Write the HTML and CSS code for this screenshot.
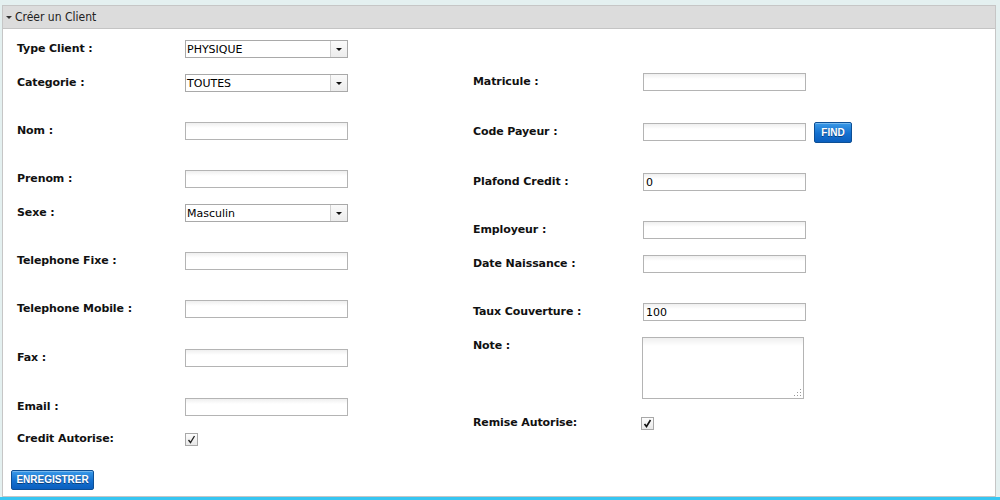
FILE: index.html
```html
<!DOCTYPE html>
<html>
<head>
<meta charset="utf-8">
<link rel="stylesheet" href="styles.css">
</head>
<body>
<div class="panel">
  <div class="panel-head"><span class="caret"></span>Créer un Client</div>
  <div class="panel-body">
    <div class="form">
      <div class="col left">
        <div class="row"><label>Type Client :</label><div class="select"><span class="val">PHYSIQUE</span><span class="arrow"></span></div></div>
        <div class="row m16"><label>Categorie :</label><div class="select"><span class="val">TOUTES</span><span class="arrow"></span></div></div>
        <div class="row m30"><label>Nom :</label><div class="input"></div></div>
        <div class="row m30"><label>Prenom :</label><div class="input"></div></div>
        <div class="row m16"><label>Sexe :</label><div class="select"><span class="val">Masculin</span><span class="arrow"></span></div></div>
        <div class="row m30"><label>Telephone Fixe :</label><div class="input"></div></div>
        <div class="row m30"><label>Telephone Mobile :</label><div class="input"></div></div>
        <div class="row m31"><label>Fax :</label><div class="input"></div></div>
        <div class="row m31"><label>Email :</label><div class="input"></div></div>
        <div class="row m14"><label>Credit Autorise:</label><span class="check"><svg viewBox="0 0 11 11" width="11" height="11"><path d="M2.5 6 L4.5 8.5 L8.5 2" fill="none" stroke="#222" stroke-width="1.3"/></svg></span></div>
      </div>
      <div class="col right">
        <div class="row m33"><label>Matricule :</label><div class="input"></div></div>
        <div class="row m32"><label>Code Payeur :</label><div class="input"></div><button class="btn find">FIND</button></div>
        <div class="row m32"><label>Plafond Credit :</label><div class="input">0</div></div>
        <div class="row m30"><label>Employeur :</label><div class="input"></div></div>
        <div class="row m16"><label>Date Naissance :</label><div class="input"></div></div>
        <div class="row m30"><label>Taux Couverture :</label><div class="input">100</div></div>
        <div class="row m16 top"><label>Note :</label><div class="textarea"><span class="grip"></span></div></div>
        <div class="row m15"><label>Remise Autorise:</label><span class="check r"><svg viewBox="0 0 11 11" width="11" height="11"><path d="M2.5 6 L4.5 8.5 L8.5 2" fill="none" stroke="#111" stroke-width="1.6"/></svg></span></div>
      </div>
    </div>
    <div class="actions"><button class="btn save">ENREGISTRER</button></div>
  </div>
</div>
<div class="bottom-bar"></div>
</body>
</html>
```

FILE: styles.css
```css
html, body {
  margin: 0;
  padding: 0;
}
body {
  background: #e4f0f0;
  font-family: "DejaVu Sans", Verdana, sans-serif;
  color: #111;
  width: 1000px;
  height: 500px;
  overflow: hidden;
  position: relative;
}
.panel {
  margin: 5px 4px 0 2px;
  border: 1px solid #c6c6c6;
  background: #fff;
  height: 492px;
  box-sizing: border-box;
}
.panel-head {
  height: 22px;
  background: #dcdcdc;
  border-bottom: 1px solid #c4c4c4;
  font-family: "DejaVu Sans Condensed", "DejaVu Sans", sans-serif;
  font-size: 12px;
  color: #222;
  display: flex;
  align-items: center;
  padding-left: 3px;
}
.caret {
  width: 0;
  height: 0;
  border-left: 3px solid transparent;
  border-right: 3px solid transparent;
  border-top: 3px solid #333;
  margin-right: 3px;
  margin-top: 1px;
}
.panel-body {
  padding: 11px 0 0 8px;
}
.form {
  display: flex;
  padding-left: 6px;
}
.col {
  display: flex;
  flex-direction: column;
}
.col.left {
  width: 456px;
}
.row {
  display: flex;
  align-items: center;
  height: 18px;
}
.row.top {
  align-items: flex-start;
  height: auto;
}
.row.top label {
  margin-top: 2px;
}
.m14 { margin-top: 14px; }
.m15 { margin-top: 15px; }
.m16 { margin-top: 16px; }
.m30 { margin-top: 30px; }
.m31 { margin-top: 31px; }
.m32 { margin-top: 32px; }
.m33 { margin-top: 33px; }
label {
  font-weight: bold;
  font-size: 11px;
  width: 168px;
  flex: none;
  white-space: nowrap;
  letter-spacing: -0.1px;
  margin-top: -1px;
}
.right label {
  width: 170px;
}
.input, .select {
  width: 163px;
  height: 18px;
  box-sizing: border-box;
  border: 1px solid #b4b4b4;
  background: linear-gradient(#efefef, #fff 5px);
  font-size: 11px;
  line-height: 14px;
  padding: 2px 0 0 2px;
  color: #000;
}
.select {
  display: flex;
  background: #fff;
  padding: 0;
  border-color: #a9a9a9;
}
.select .val {
  flex: 1;
  padding: 2px 0 0 1px;
}
.select .arrow {
  width: 16px;
  border-left: 1px solid #d0d0d0;
  background: linear-gradient(#fafafa, #ececec);
  display: flex;
  align-items: center;
  justify-content: center;
}
.select .arrow::before {
  content: "";
  border-left: 3px solid transparent;
  border-right: 3px solid transparent;
  border-top: 3px solid #111;
}
.check {
  width: 13px;
  height: 13px;
  box-sizing: border-box;
  border: 1px solid #a8a8a8;
  background: linear-gradient(#fdfdfd, #e8e8e8);
  display: flex;
  align-items: center;
  justify-content: center;
}
.check.r {
  margin-left: -2px;
}
.textarea {
  width: 162px;
  height: 62px;
  box-sizing: border-box;
  border: 1px solid #b4b4b4;
  background: linear-gradient(#efefef, #fff 8px);
  margin-left: -1px;
  position: relative;
}
.grip {
  position: absolute;
  right: 2px;
  bottom: 2px;
  width: 8px;
  height: 8px;
  background:
    radial-gradient(circle, #999 0.7px, transparent 0.8px) 0 0 / 3px 3px;
  clip-path: polygon(100% 0, 100% 100%, 0 100%);
}
.btn {
  font-family: "Liberation Sans", Arial, sans-serif;
  font-weight: bold;
  color: #fff;
  text-shadow: 0 1px 0 #0b3f7a;
  border: 1px solid #0d4f95;
  border-radius: 2px;
  background: linear-gradient(#3a9ae8, #1470cf 55%, #0a5fbf);
  box-shadow: inset 0 1px 0 rgba(255,255,255,0.3);
  padding: 0;
  cursor: pointer;
}
.find {
  width: 38px;
  height: 21px;
  font-size: 10px;
  margin-left: 8px;
  margin-top: -3px;
  margin-bottom: -3px;
}
.actions {
  margin-top: 20px;
}
.save {
  width: 83px;
  height: 20px;
  font-size: 10px;
}
.bottom-bar {
  position: absolute;
  left: 0;
  right: 0;
  bottom: 0;
  height: 3px;
  background: #37c6f2;
}
```
